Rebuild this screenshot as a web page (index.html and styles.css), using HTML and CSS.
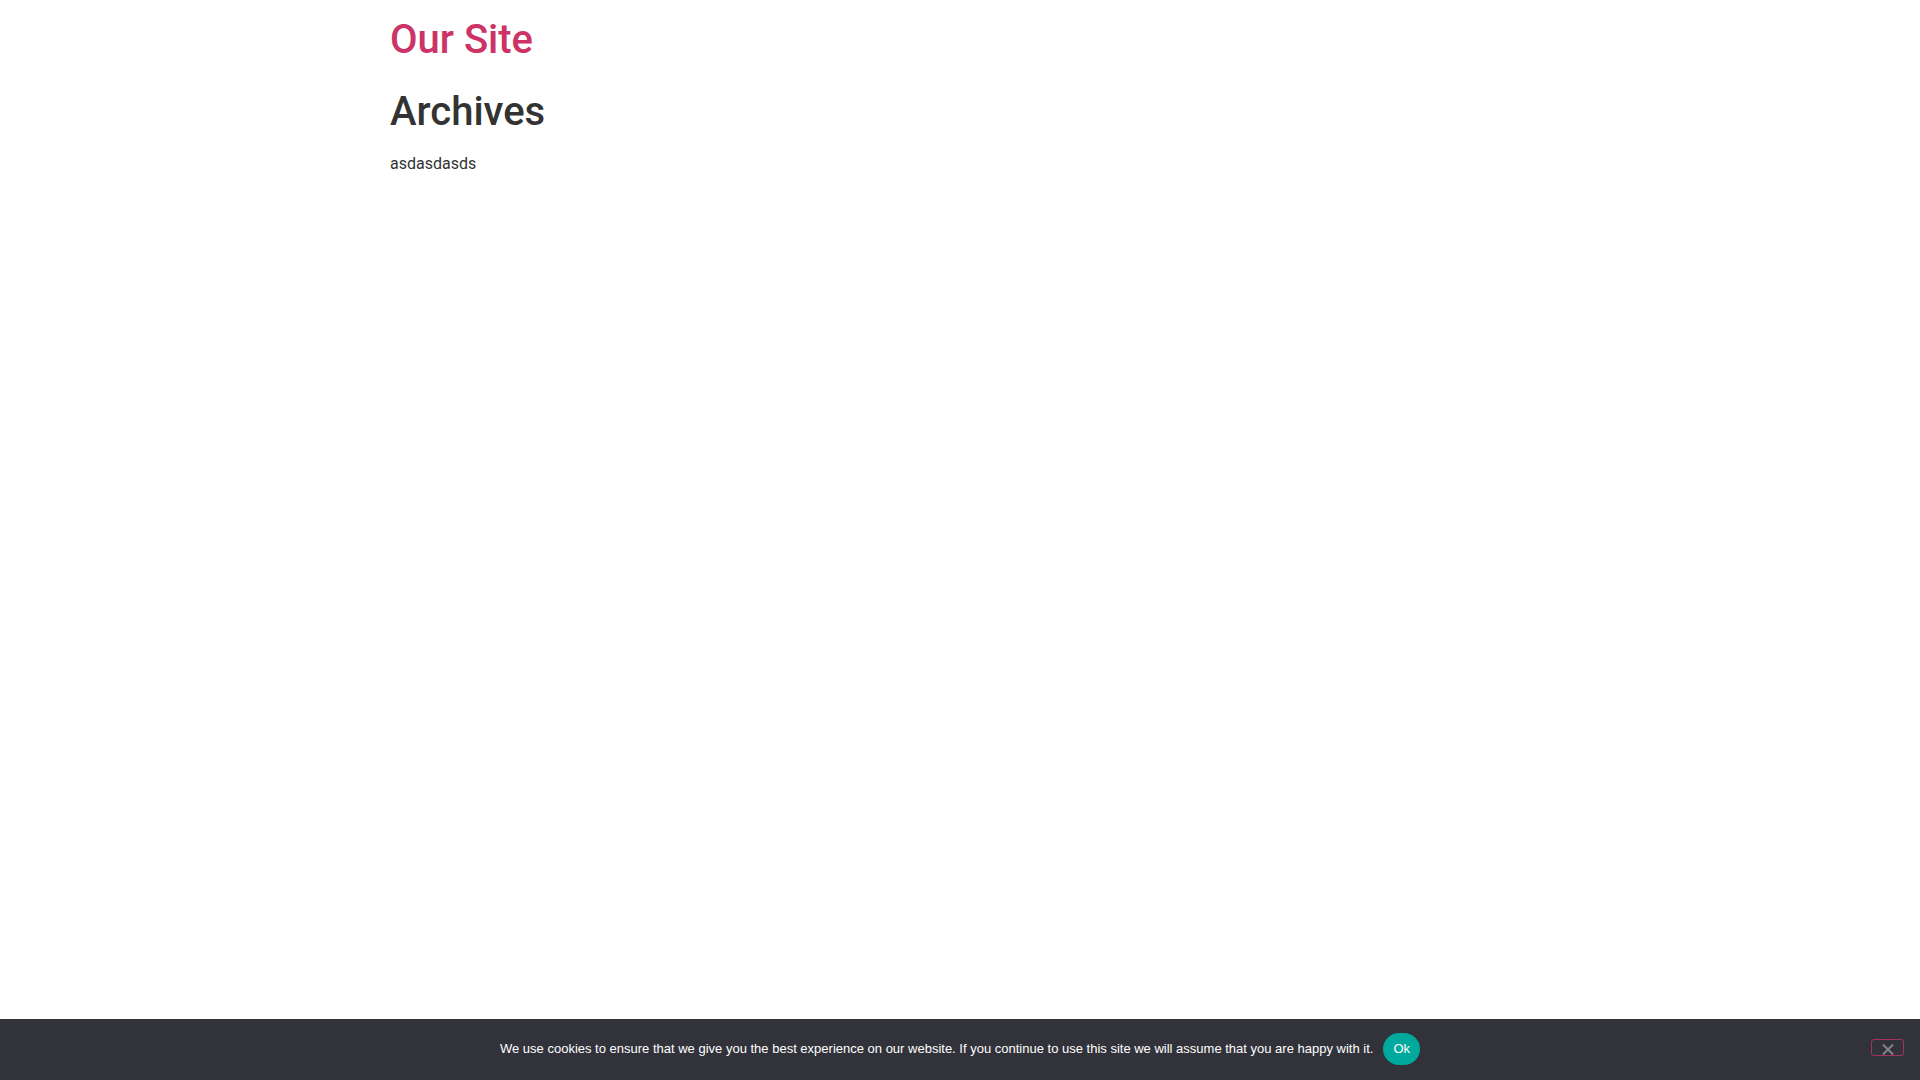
FILE: index.html
```html
<!DOCTYPE html>
<html lang="en">
<head>
  <meta charset="UTF-8">
  <title>Archives – Our Site</title>
  <link rel="stylesheet" href="styles.css">
</head>
<body>

  <header class="site-header">
    <div class="site-branding">
      <h1 class="site-title"><a href="#">Our Site</a></h1>
    </div>
  </header>

  <main class="site-main">
    <header class="page-header">
      <h1 class="entry-title">Archives</h1>
    </header>
    <div class="page-content">
      <p>asdasdasds</p>
    </div>
  </main>

  <div id="cookie-notice" class="cookie-notice">
    <div class="cookie-notice-container">
      <span class="cn-text">We use cookies to ensure that we give you the best experience on our website. If you continue to use this site we will assume that you are happy with it.</span>
      <a href="#" class="cn-button">Ok</a>
      <span class="cn-close" aria-label="No">
        <svg width="12" height="11" viewBox="0 0 12 11">
          <path d="M1 0.5 L11 10.5 M11 0.5 L1 10.5" stroke="#84848a" stroke-width="2" fill="none"/>
        </svg>
      </span>
    </div>
  </div>

</body>
</html>
```

FILE: styles.css
```css
html, body {
  margin: 0;
  background: #fff;
}

body {
  font-family: Roboto, "Segoe UI", Arial, sans-serif;
  font-size: 16px;
  line-height: 1.5;
  color: #333;
}

a {
  color: #c36;
  text-decoration: none;
}

h1 {
  margin: 0.5rem 0 1rem;
  font-size: 2.5rem;
  font-weight: 500;
  line-height: 1.2;
}

.site-header,
.site-main {
  max-width: 1140px;
  margin: 0 auto;
}

.site-title {
  margin: 0;
  padding: 16px 0 0;
}

.page-header .entry-title {
  margin: 24px 0 0;
  color: #333;
}

.page-content p {
  margin: 16px 0 0;
}

/* cookie bar pinned to the bottom */
.cookie-notice {
  position: fixed;
  left: 0;
  right: 0;
  bottom: 0;
  background: #32323a;
  color: #fff;
  font-family: "Liberation Sans", Arial, sans-serif;
  font-size: 13px;
  line-height: 20px;
}

.cookie-notice-container {
  position: relative;
  display: flex;
  justify-content: center;
  align-items: center;
  padding: 14px 30px 16px;
  height: 31px;
}

.cn-button {
  margin-left: 10px;
  padding: 9px 10px;
  border-radius: 16px;
  background: #00a99d;
  color: #fff;
  font-size: 13px;
  line-height: 14px;
}

.cn-close {
  position: absolute;
  right: 16px;
  top: 20px;
  width: 31px;
  height: 15px;
  border: 1px solid #a3335e;
  border-radius: 3px;
  display: flex;
  align-items: flex-end;
  justify-content: center;
}
```
